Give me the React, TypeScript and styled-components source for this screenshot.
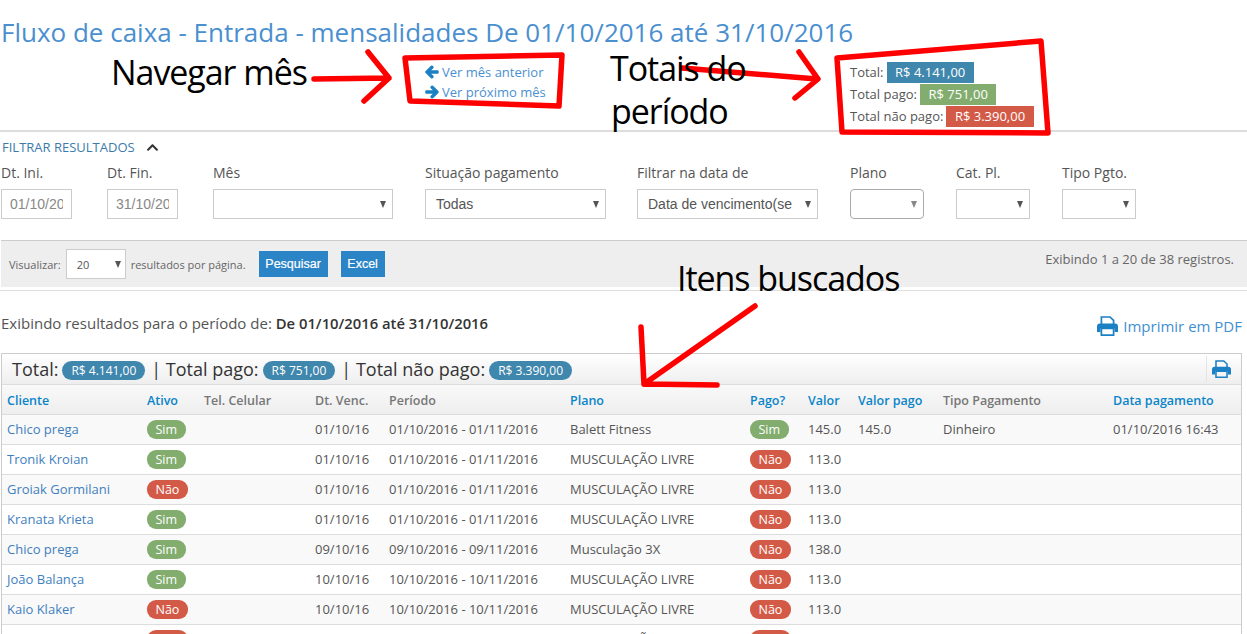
import React from "react";
import styled, { createGlobalStyle } from "styled-components";
import { FaArrowLeft, FaArrowRight, FaChevronUp } from "react-icons/fa";

const Global = createGlobalStyle`
  html, body { margin: 0; padding: 0; background: #fff; height: 634px; overflow: hidden; }
  body { font-family: "Open Sans", "Noto Sans", sans-serif; font-size: 13px; color: #555; }
  * { box-sizing: border-box; }
`;

const Page = styled.div`
  position: relative;
  width: 1247px;
  height: 634px;
  overflow: hidden;
`;

const Title = styled.h1`
  margin: 0;
  padding: 14px 0 0 1px;
  height: 54px;
  font-size: 26px;
  line-height: 36px;
  font-weight: 400;
  color: #4a8fcf;
  white-space: nowrap;
`;

const Summary = styled.div`
  display: flex;
  height: 76px;
  padding-left: 425px;
`;

const NavLinks = styled.div`
  width: 425px;
  padding-top: 8px;
  display: flex;
  flex-direction: column;
`;

const NavLink = styled.a`
  display: flex;
  align-items: center;
  gap: 3px;
  height: 20px;
  font-size: 13px;
  color: #4a8fcf;
  svg {
    color: #1b80c4;
    font-size: 14px;
    stroke: currentColor;
    stroke-width: 45;
  }
`;

const Totals = styled.div`
  padding-top: 7px;
  display: flex;
  flex-direction: column;
`;

const TotalRow = styled.div`
  display: flex;
  align-items: center;
  height: 22px;
  font-size: 13px;
  color: #555;
`;

const TotalTag = styled.span<{ $bg: string }>`
  margin-left: 3px;
  height: 21px;
  padding: 0 8.5px;
  display: inline-flex;
  align-items: center;
  font-size: 13px;
  color: #fff;
  background: ${(p) => p.$bg};
`;

const Filters = styled.section`
  border-top: 2px solid #ddd;
  height: 110px;
  padding-left: 1px;
`;

const FilterToggle = styled.div`
  display: flex;
  align-items: center;
  gap: 11px;
  height: 30px;
  padding: 0 0 0 1px;
  font-size: 13px;
  color: #3a7bab;
  svg { color: #333; font-size: 13px; }
`;

const FilterGrid = styled.div`
  display: flex;
`;

const Field = styled.label<{ $w: number }>`
  display: flex;
  flex-direction: column;
  flex: 0 0 ${(p) => p.$w}px;
`;

const FieldLabel = styled.span`
  height: 27px;
  font-size: 14px;
  line-height: 22px;
  color: #555;
`;

const DateInput = styled.input`
  width: 71px;
  height: 30px;
  padding: 0 8px;
  border: 1px solid #ccc;
  border-radius: 0;
  font-family: "Liberation Sans", Arial, sans-serif;
  font-size: 14px;
  color: #888;
  background: #fff;
  outline: none;
`;

const SelectWrap = styled.span<{ $w: number; $round?: boolean }>`
  position: relative;
  display: block;
  width: ${(p) => p.$w}px;
  &::after {
    content: "";
    position: absolute;
    right: 7px;
    top: 50%;
    margin-top: -3px;
    border-left: 3px solid transparent;
    border-right: 3px solid transparent;
    border-top: 7px solid ${(p) => (p.$round ? "#888" : "#555")};
  }
`;

const Select = styled.select<{ $round?: boolean }>`
  appearance: none;
  width: 100%;
  height: 30px;
  padding: 0 22px 0 10px;
  border: 1px solid ${(p) => (p.$round ? "#aaa" : "#ccc")};
  border-radius: ${(p) => (p.$round ? "4px" : "0")};
  background: #fff;
  font-family: "Liberation Sans", Arial, sans-serif;
  font-size: 14px;
  color: #555;
  outline: none;
`;

const Toolbar = styled.div`
  display: flex;
  align-items: center;
  height: 47px;
  padding: 0 9px 0 8px;
  margin-left: 1px;
  background: #eee;
  border-top: 1px solid #ccc;
  font-size: 11px;
  color: #666;
`;

const PageSize = styled(SelectWrap)`
  margin: 0 5px 0 5px;
  &::after { right: 5px; margin-top: -3px; }
`;

const SmallSelect = styled(Select)`
  font-family: "Open Sans", sans-serif;
  font-size: 11px;
  padding-left: 10px;
`;

const Button = styled.button<{ $ml: number; $w: number }>`
  width: ${(p) => p.$w}px;
  height: 26px;
  margin-left: ${(p) => p.$ml}px;
  padding: 0;
  border: 0;
  background: #2a84c6;
  color: #fff;
  font-family: "Liberation Sans", Arial, sans-serif;
  font-size: 12.5px;
  font-weight: 400;
  -webkit-text-stroke: 0.2px #fff;
`;

const Records = styled.span`
  margin-left: auto;
  align-self: flex-start;
  margin-top: 9px;
  padding-right: 4px;
  font-size: 13px;
  color: #666;
`;

const Rule = styled.div`
  height: 1px;
  margin-top: 3px;
  background: #ddd;
`;

const PeriodRow = styled.div`
  display: flex;
  justify-content: space-between;
  height: 62px;
  padding: 20px 5px 0 1px;
`;

const PeriodText = styled.div`
  font-size: 15px;
  line-height: 24px;
  color: #555;
  b { font-size: 14.8px; font-weight: 600; color: #333; }
`;

const PdfLink = styled.a`
  display: flex;
  align-items: center;
  gap: 5px;
  height: 24px;
  margin-top: 3px;
  font-size: 15px;
  color: #3f8fd0;
  svg { color: #1b80c4; }
`;

const TableBox = styled.div`
  margin-left: 1px;
  width: 1241px;
  border: 1px solid #ccc;
  border-bottom: 0;
`;

const TableTitle = styled.div`
  display: flex;
  align-items: center;
  height: 31px;
  padding-left: 10px;
  background: linear-gradient(#fff, #eee);
  border-bottom: 1px solid #ddd;
  font-size: 18px;
  color: #333;
  white-space: pre;
`;

const Pill = styled.span`
  display: inline-block;
  margin: 3px 6px 0 4px;
  height: 19px;
  line-height: 19px;
  padding: 0 9px;
  border-radius: 10px;
  background: #3f87ad;
  color: #fff;
  font-size: 12px;
`;

const TitlePrint = styled.span`
  margin-left: auto;
  display: flex;
  align-items: center;
  width: 35px;
  height: 26px;
  padding-left: 5px;
  border-left: 1px solid #e4e4e4;
  color: #1b80c4;
`;

const Table = styled.table`
  width: 1239px;
  table-layout: fixed;
  border-collapse: collapse;
`;

const Th = styled.th<{ $link?: boolean }>`
  height: 29px;
  padding: 2px 5px 0;
  text-align: left;
  font-size: 12.5px;
  font-weight: 600;
  white-space: nowrap;
  color: ${(p) => (p.$link ? "#0a85c9" : "#777")};
  background: linear-gradient(#f9f9f9, #eee);
`;

const Tr = styled.tr`
  height: 30px;
  &:nth-child(odd) { background: #f9f9f9; }
  &:nth-child(even) { background: #fff; }
`;

const Td = styled.td`
  padding: 0 5px;
  border-top: 1px solid #ddd;
  font-size: 13px;
  white-space: nowrap;
  color: #555;
`;

const ClientLink = styled.a`
  color: #3f7fc0;
`;

const Status = styled.span<{ $on: boolean }>`
  display: inline-block;
  height: 19px;
  line-height: 19px;
  padding: 0 8.5px;
  border-radius: 9px;
  font-size: 12.5px;
  color: #fff;
  background: ${(p) => (p.$on ? "#82ad6f" : "#d35a47")};
`;

const Drawing = styled.svg`
  position: absolute;
  left: 0;
  top: 0;
  pointer-events: none;
`;

const Note = styled.div<{ $x: number; $y: number }>`
  position: absolute;
  left: ${(p) => p.$x}px;
  top: ${(p) => p.$y}px;
  font-family: "Open Sans", sans-serif;
  font-size: 34px;
  line-height: 44px;
  letter-spacing: -1.05px;
  color: #000;
  white-space: nowrap;
`;

function PrintIcon({ size }: { size: number }) {
  return (
    <svg width={size} height={(size * 20) / 21} viewBox="0 0 21 20">
      <path fill="none" stroke="currentColor" strokeWidth="1.7" d="M4.4 8.5V1h8.6l3.6 3.4v4.1" />
      <path fill="currentColor" d="M3 7.5h15a3 3 0 0 1 3 3V16h-3.5v-3.5h-14V16H0v-5.5a3 3 0 0 1 3-3z" />
      <path fill="none" stroke="currentColor" strokeWidth="1.7" d="M4.4 12.5h12.2v6.6H4.4z" />
    </svg>
  );
}

type Row = [string, boolean, string, string, string, boolean, string, string?, string?, string?];
const rows: Row[] = [
  ["Chico prega", true, "01/10/16", "01/10/2016 - 01/11/2016", "Balett Fitness", true, "145.0", "145.0", "Dinheiro", "01/10/2016 16:43"],
  ["Tronik Kroian", true, "01/10/16", "01/10/2016 - 01/11/2016", "MUSCULAÇÃO LIVRE", false, "113.0"],
  ["Groiak Gormilani", false, "01/10/16", "01/10/2016 - 01/11/2016", "MUSCULAÇÃO LIVRE", false, "113.0"],
  ["Kranata Krieta", true, "01/10/16", "01/10/2016 - 01/11/2016", "MUSCULAÇÃO LIVRE", false, "113.0"],
  ["Chico prega", true, "09/10/16", "09/10/2016 - 09/11/2016", "Musculação 3X", false, "138.0"],
  ["João Balança", true, "10/10/16", "10/10/2016 - 10/11/2016", "MUSCULAÇÃO LIVRE", false, "113.0"],
  ["Kaio Klaker", false, "10/10/16", "10/10/2016 - 10/11/2016", "MUSCULAÇÃO LIVRE", false, "113.0"],
  ["", false, "", "", "MUSCULAÇÃO LIVRE", false, ""],
];

const cols = [140, 57, 111, 74, 181, 180, 58, 50, 85, 170, 133];
const heads: [string, boolean][] = [
  ["Cliente", true], ["Ativo", true], ["Tel. Celular", false], ["Dt. Venc.", false], ["Período", false],
  ["Plano", true], ["Pago?", true], ["Valor", true], ["Valor pago", true], ["Tipo Pagamento", false], ["Data pagamento", true],
];

export default function App() {
  return (
    <Page>
      <Global />
      <Title>Fluxo de caixa - Entrada - mensalidades De 01/10/2016 até 31/10/2016</Title>
      <Summary>
        <NavLinks>
          <NavLink><FaArrowLeft />Ver mês anterior</NavLink>
          <NavLink><FaArrowRight />Ver próximo mês</NavLink>
        </NavLinks>
        <Totals>
          <TotalRow>Total:<TotalTag $bg="#3f87ad">R$ 4.141,00</TotalTag></TotalRow>
          <TotalRow>Total pago:<TotalTag $bg="#82ad6f">R$ 751,00</TotalTag></TotalRow>
          <TotalRow>Total não pago:<TotalTag $bg="#d35a47">R$ 3.390,00</TotalTag></TotalRow>
        </Totals>
      </Summary>
      <Filters>
        <FilterToggle>FILTRAR RESULTADOS <FaChevronUp /></FilterToggle>
        <FilterGrid>
          <Field $w={106}><FieldLabel>Dt. Ini.</FieldLabel><DateInput readOnly value="01/10/2016" /></Field>
          <Field $w={106}><FieldLabel>Dt. Fin.</FieldLabel><DateInput readOnly value="31/10/2016" /></Field>
          <Field $w={212}><FieldLabel>Mês</FieldLabel><SelectWrap $w={180}><Select /></SelectWrap></Field>
          <Field $w={212}><FieldLabel>Situação pagamento</FieldLabel><SelectWrap $w={181}><Select><option>Todas</option></Select></SelectWrap></Field>
          <Field $w={213}><FieldLabel>Filtrar na data de</FieldLabel><SelectWrap $w={181}><Select><option>Data de vencimento(se</option></Select></SelectWrap></Field>
          <Field $w={106}><FieldLabel>Plano</FieldLabel><SelectWrap $w={74} $round><Select $round /></SelectWrap></Field>
          <Field $w={106}><FieldLabel>Cat. Pl.</FieldLabel><SelectWrap $w={74}><Select /></SelectWrap></Field>
          <Field $w={90}><FieldLabel>Tipo Pgto.</FieldLabel><SelectWrap $w={74}><Select /></SelectWrap></Field>
        </FilterGrid>
      </Filters>
      <Toolbar>
        Visualizar:
        <PageSize $w={60}><SmallSelect><option>20</option></SmallSelect></PageSize>
        resultados por página.
        <Button $ml={13} $w={69}>Pesquisar</Button>
        <Button $ml={13} $w={44}>Excel</Button>
        <Records>Exibindo 1 a 20 de 38 registros.</Records>
      </Toolbar>
      <Rule />
      <PeriodRow>
        <PeriodText>Exibindo resultados para o período de: <b>De 01/10/2016 até 31/10/2016</b></PeriodText>
        <PdfLink><PrintIcon size={21} />Imprimir em PDF</PdfLink>
      </PeriodRow>
      <TableBox>
        <TableTitle>
          Total:<Pill>R$ 4.141,00</Pill>| Total pago:<Pill>R$ 751,00</Pill>| Total não pago:<Pill>R$ 3.390,00</Pill>
          <TitlePrint><PrintIcon size={19} /></TitlePrint>
        </TableTitle>
        <Table>
          <colgroup>{cols.map((w, i) => <col key={i} width={w} />)}</colgroup>
          <thead>
            <tr>{heads.map(([h, link]) => <Th key={h} $link={link}>{h}</Th>)}</tr>
          </thead>
          <tbody>
            {rows.map((r, i) => (
              <Tr key={i}>
                <Td><ClientLink>{r[0]}</ClientLink></Td>
                <Td><Status $on={r[1]}>{r[1] ? "Sim" : "Não"}</Status></Td>
                <Td />
                <Td>{r[2]}</Td>
                <Td>{r[3]}</Td>
                <Td>{r[4]}</Td>
                <Td><Status $on={r[5]}>{r[5] ? "Sim" : "Não"}</Status></Td>
                <Td>{r[6]}</Td>
                <Td>{r[7]}</Td>
                <Td>{r[8]}</Td>
                <Td>{r[9]}</Td>
              </Tr>
            ))}
          </tbody>
        </Table>
      </TableBox>
      <Drawing width="1247" height="634" fill="none" stroke="#f00" strokeWidth="5.5" strokeLinecap="round" strokeLinejoin="round">
        <path d="M314 79 L389 78 M368 52 L389 78 L364 101" />
        <path d="M405 58 L562 55 L559 106 L410 101 Z" />
        <path d="M682 68 L817 79 M799 52 L818 79 L795 98" />
        <path d="M837 58 L1041 41 L1048 133 L842 132 Z" />
        <path d="M755 306 L644 384 M641 327 L644 384 L717 385" />
      </Drawing>
      <Note $x={111} $y={50}>Navegar mês</Note>
      <Note $x={610} $y={46}>Totais do</Note>
      <Note $x={611} $y={89}>período</Note>
      <Note $x={677} $y={256}>Itens buscados</Note>
    </Page>
  );
}
